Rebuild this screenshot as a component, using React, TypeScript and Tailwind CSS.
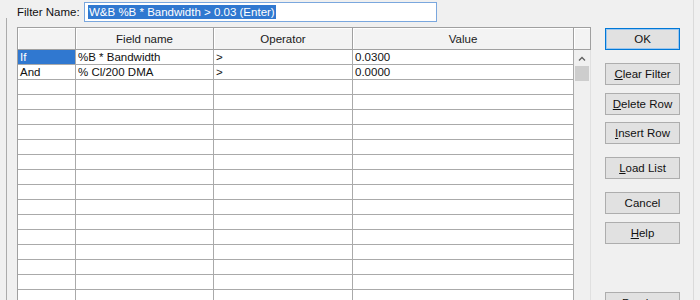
import React from "react";

const rows: [string, string, string, string][] = [
  ["If", "%B * Bandwidth", ">", "0.0300"],
  ["And", "% Cl/200 DMA", ">", "0.0000"],
];

function Btn({ children, className = "", primary = false }: { children: React.ReactNode; className?: string; primary?: boolean }) {
  return (
    <div
      className={
        "w-[75px] h-[22px] shrink-0 flex items-center justify-center bg-[#e1e1e1] border " +
        (primary ? "border-[#0078d7] shadow-[inset_0_0_0_1px_#9cc6ee]" : "border-[#adadad]") +
        " " +
        className
      }
    >
      {children}
    </div>
  );
}

export default function App() {
  const total = 18;
  const data = Array.from({ length: total }, (_, i) => rows[i] ?? ["", "", "", ""]);
  return (
    <div
      className="w-[700px] h-[300px] bg-[#f0f0f0] overflow-hidden flex text-[11.5px] leading-[14px] text-[#111]"
      style={{ fontFamily: '"Liberation Sans", Arial, sans-serif' }}
    >
      <div className="w-[693px] flex flex-col">
        {/* Filter name row */}
        <div className="h-[27px] flex items-start pt-[2px] shrink-0">
          <span className="ml-[17px] mt-[3px] w-[67px] shrink-0 whitespace-nowrap">Filter Name:</span>
          <div className="w-[353px] h-[20px] shrink-0 border border-[#7aa7de] bg-white flex items-center pl-[3px]">
            <span className="bg-[#3078d0] text-white px-px whitespace-nowrap">W&amp;B %B * Bandwidth &gt; 0.03 (Enter)</span>
          </div>
        </div>
        {/* Body */}
        <div className="flex flex-1 min-h-0">
          <div className="ml-[6px] w-px bg-[#ababab] -mt-[9px] shrink-0" />
          {/* Grid */}
          <div className="ml-[10px] w-[574px] flex flex-col border-t border-l border-[#a0a0a0] shrink-0">
            {/* header */}
            <div className="flex h-[22px] border-b border-[#a0a0a0] shrink-0">
              {[
                ["", "w-[58px]"],
                ["Field name", "w-[138px]"],
                ["Operator", "w-[139px]"],
                ["Value", "w-[221px]"],
                ["", "w-[17px]"],
              ].map(([t, w], i) => (
                <div
                  key={i}
                  className={
                    w +
                    " h-full shrink-0 flex items-center justify-center bg-[#f3f3f3] border-r border-[#a0a0a0] shadow-[inset_1px_1px_0_#ffffff] text-[#1a1a1a]"
                  }
                >
                  {t}
                </div>
              ))}
            </div>
            {/* body */}
            <div className="flex flex-1 min-h-0 overflow-hidden">
              <div className="flex flex-col">
                {data.map((r, i) => (
                  <div key={i} className="flex h-[15px] shrink-0">
                    {r.map((c, j) => (
                      <div
                        key={j}
                        className={
                          (j === 0 ? "w-[58px] " : j === 1 ? "w-[138px] " : j === 2 ? "w-[139px] " : "w-[221px] ") +
                          "h-full shrink-0 border-r border-b border-[#aaaaaa] pl-[2px] whitespace-nowrap overflow-hidden " +
                          (i === 0 && j === 0 ? "bg-[#3078d0] text-white" : "bg-white")
                        }
                      >
                        {c}
                      </div>
                    ))}
                  </div>
                ))}
              </div>
              <div className="w-[17px] border-r border-[#e0e0e0] bg-[#f0f0f0] flex flex-col items-center shrink-0">
                <div className="h-[16px] w-full flex items-center justify-center">
                  <svg width="8" height="5" viewBox="0 0 8 5">
                    <polyline points="1,4.5 4,1.5 7,4.5" fill="none" stroke="#606060" strokeWidth="1.3" />
                  </svg>
                </div>
                <div className="w-[14px] h-[15px] bg-[#cdcdcd]" />
              </div>
            </div>
          </div>
          {/* Buttons */}
          <div className="ml-[14px] flex flex-col shrink-0 pt-px">
            <Btn primary>OK</Btn>
            <Btn className="mt-[13px]">
              <span><u>C</u>lear Filter</span>
            </Btn>
            <Btn className="mt-[8px]">
              <span><u>D</u>elete Row</span>
            </Btn>
            <Btn className="mt-[7px]">
              <span><u>I</u>nsert Row</span>
            </Btn>
            <Btn className="mt-[13px]">
              <span><u>L</u>oad List</span>
            </Btn>
            <Btn className="mt-[13px]">Cancel</Btn>
            <Btn className="mt-[8px]">
              <span><u>H</u>elp</span>
            </Btn>
            <Btn className="mt-[48px]">
              <span>Preview</span>
            </Btn>
          </div>
        </div>
      </div>
      <div className="w-px h-full bg-[#dadada]" />
    </div>
  );
}
